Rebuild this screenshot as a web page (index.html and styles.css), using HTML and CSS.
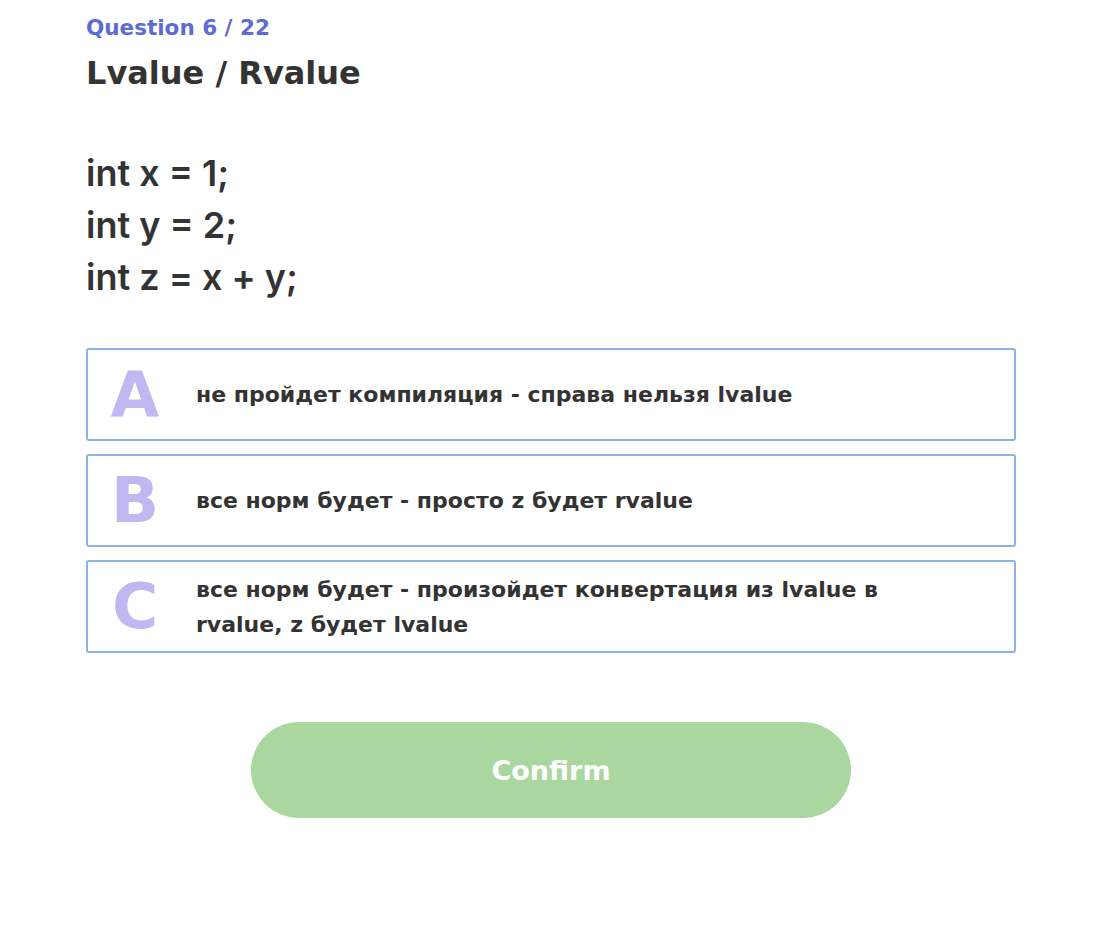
FILE: index.html
```html
<!DOCTYPE html>
<html lang="ru">
<head>
<meta charset="utf-8">
<title>Question 6 / 22</title>
<link rel="stylesheet" href="styles.css">
</head>
<body>
<main class="quiz">
  <div class="counter">Question 6 / 22</div>
  <h1 class="title">Lvalue / Rvalue</h1>
  <div class="code">
    <div>int x = 1;</div>
    <div>int y = 2;</div>
    <div>int z = x + y;</div>
  </div>
  <div class="options">
    <div class="option"><span class="letter">A</span><span class="text">не пройдет компиляция - справа нельзя lvalue</span></div>
    <div class="option"><span class="letter">B</span><span class="text">все норм будет - просто z будет rvalue</span></div>
    <div class="option"><span class="letter">C</span><span class="text">все норм будет - произойдет конвертация из lvalue в rvalue, z будет lvalue</span></div>
  </div>
  <div class="actions">
    <button class="confirm">Confirm</button>
  </div>
</main>
</body>
</html>
```

FILE: styles.css
```css
html, body {
  margin: 0;
  padding: 0;
  background: #ffffff;
}
body {
  font-family: "DejaVu Sans", "Liberation Sans", sans-serif;
  color: #333333;
}
.quiz {
  width: 930px;
  padding: 13px 0 0 86px;
}
.counter {
  font-size: 21.5px;
  font-weight: 700;
  color: #5d6bd3;
  line-height: 30px;
}
.title {
  margin: 10px 0 0;
  font-size: 32px;
  font-weight: 700;
  line-height: 40px;
  color: #333333;
}
.code {
  margin-top: 54px;
  font-family: Inter, "DejaVu Sans", sans-serif;
  font-size: 36px;
  font-weight: 600;
  line-height: 52px;
  color: #333333;
}
.options {
  margin-top: 45px;
  display: flex;
  flex-direction: column;
  gap: 13px;
}
.option {
  box-sizing: border-box;
  height: 93px;
  border: 2px solid #8db2e6;
  border-radius: 3px;
  display: flex;
  align-items: center;
}
.letter {
  width: 94px;
  margin-right: 14px;
  text-align: center;
  flex: none;
  font-size: 63px;
  font-weight: 700;
  color: #c1b8f1;
  line-height: 1;
}
.text {
  font-size: 22px;
  font-weight: 700;
  line-height: 35px;
  color: #333333;
  max-width: 700px;
}
.actions {
  display: flex;
  justify-content: center;
  margin-top: 69px;
}
.confirm {
  width: 600px;
  height: 96px;
  border: none;
  border-radius: 48px;
  background: #aad6a0;
  color: #ffffff;
  font-family: inherit;
  font-size: 27px;
  font-weight: 700;
  cursor: pointer;
}
```
